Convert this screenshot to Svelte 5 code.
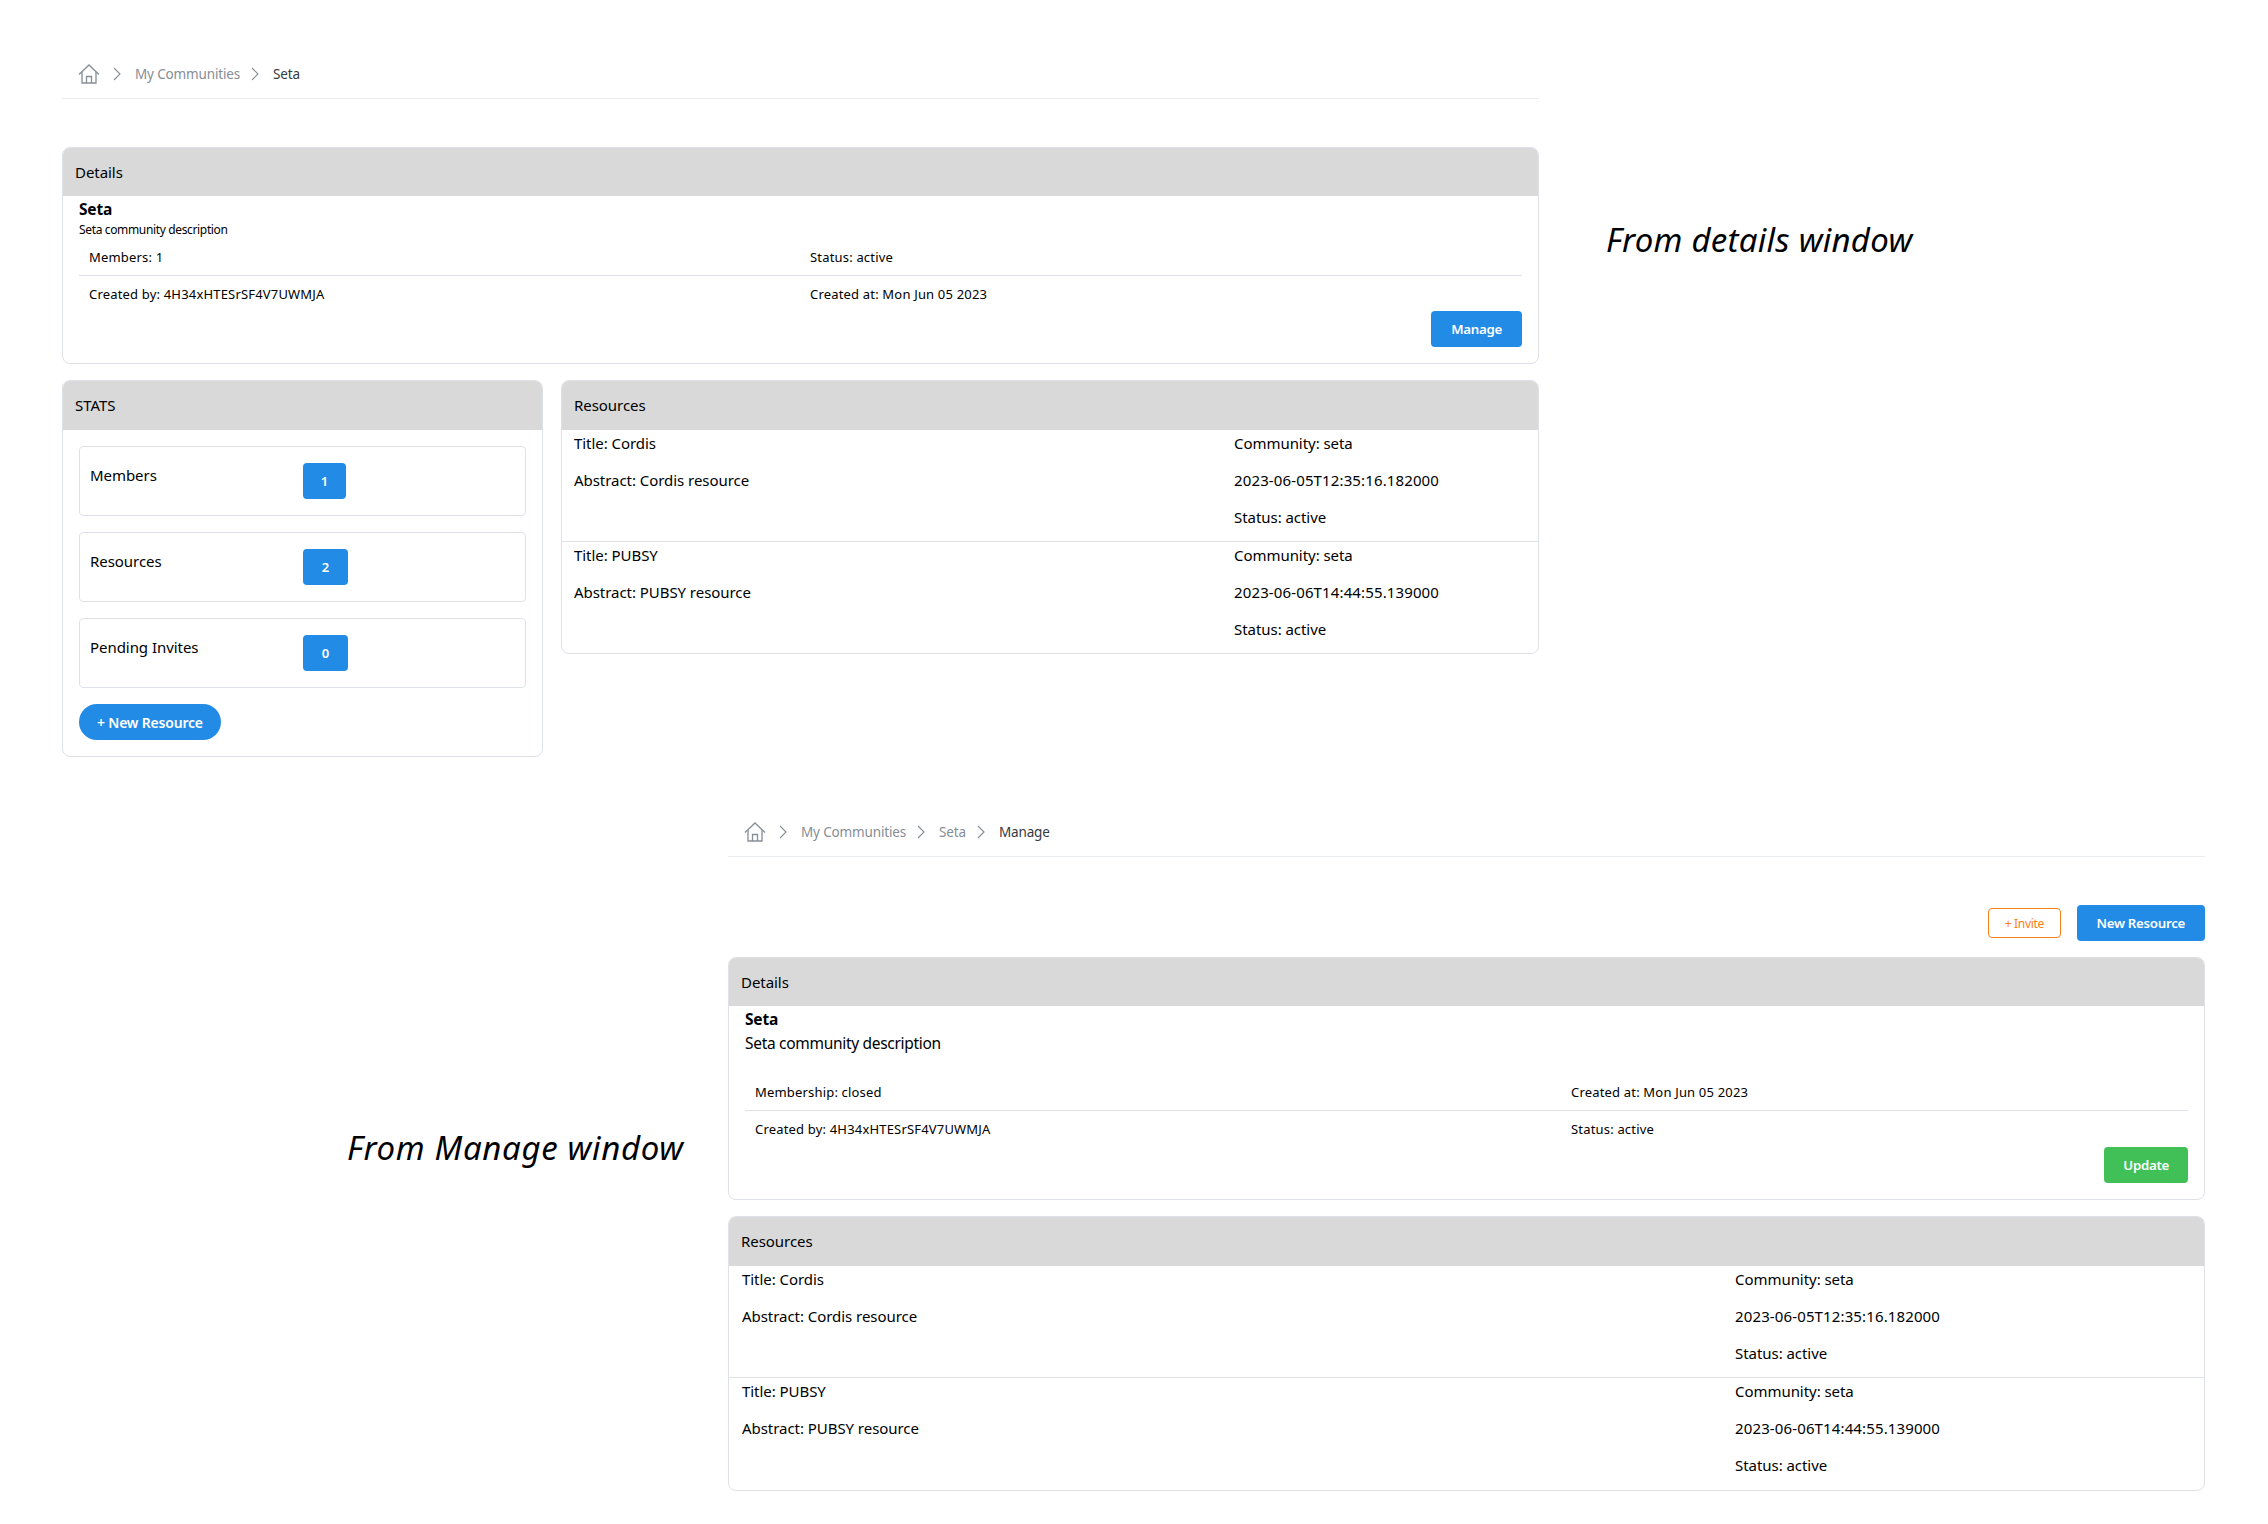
<script>
	const resources = [
		{ title: 'Cordis', abstract: 'Cordis resource', date: '2023-06-05T12:35:16.182000' },
		{ title: 'PUBSY', abstract: 'PUBSY resource', date: '2023-06-06T14:44:55.139000' }
	];
	const stats = [
		{ label: 'Members', value: 1 },
		{ label: 'Resources', value: 2 },
		{ label: 'Pending Invites', value: 0 }
	];
	const creator = 'Created by: 4H34xHTESrSF4V7UWMJA';
	const created = 'Created at: Mon Jun 05 2023';
</script>

{#snippet crumbs(items)}
	<nav class="crumbs">
		<svg class="home" viewBox="0 0 22 20" fill="none" stroke="#868e96" stroke-width="1.3" aria-label="Home">
			<path d="M1 10.5 11 1l10 9.5" />
			<path d="M4 8v11h14V8" />
			<path d="M8.5 19v-6.500h5V19" />
		</svg>
		{#each items as item, i}
			<svg class="chev" viewBox="0 0 8 14" fill="none" stroke="#868e96" stroke-width="1.1"><path d="M1 1l6 6-6 6" /></svg>
			<span class:current={i === items.length - 1}>{item}</span>
		{/each}
	</nav>
{/snippet}

{#snippet resourceCard()}
	<div class="card">
		<div class="card-head tall">Resources</div>
		{#each resources as r}
			<div class="resource">
				<div class="res-col">
					<div>Title: {r.title}</div>
					<div>Abstract: {r.abstract}</div>
				</div>
				<div class="res-col">
					<div>Community: seta</div>
					<div class="date">{r.date}</div>
					<div>Status: active</div>
				</div>
			</div>
		{/each}
	</div>
{/snippet}

<div class="page">
	<section class="top">
		<div class="panel">
			{@render crumbs(['My Communities', 'Seta'])}

			<div class="card first">
				<div class="card-head">Details</div>
				<div class="card-body">
					<div class="name">Seta</div>
					<div class="desc small">Seta community description</div>
					<div class="info one">
						<div>Members: 1</div>
						<div>Status: active</div>
						<div class="line"></div>
						<div>{creator}</div>
						<div>{created}</div>
					</div>
					<div class="end"><button class="btn blue">Manage</button></div>
				</div>
			</div>

			<div class="columns">
				<div class="card">
					<div class="card-head tall">STATS</div>
					<div class="stats">
						{#each stats as s}
							<div class="stat">
								<span class="stat-label">{s.label}</span>
								<span class="badge" class:narrow={s.value === 1}>{s.value}</span>
							</div>
						{/each}
						<div><button class="btn blue pill">+ New Resource</button></div>
					</div>
				</div>
				{@render resourceCard()}
			</div>
		</div>
		<div class="note note-top">From details window</div>
	</section>

	<section class="bottom">
		<div class="note note-bottom">From Manage window</div>
		<div class="panel">
			{@render crumbs(['My Communities', 'Seta', 'Manage'])}

			<div class="actions">
				<button class="btn invite">+ Invite</button>
				<button class="btn blue">New Resource</button>
			</div>

			<div class="card">
				<div class="card-head">Details</div>
				<div class="card-body">
					<div class="name">Seta</div>
					<div class="desc">Seta community description</div>
					<div class="info two">
						<div>Membership: closed</div>
						<div>{created}</div>
						<div class="line"></div>
						<div>{creator}</div>
						<div>Status: active</div>
					</div>
					<div class="end"><button class="btn green">Update</button></div>
				</div>
			</div>

			<div class="wide">{@render resourceCard()}</div>
		</div>
	</section>
</div>

<style>
	:global(body) {
		background: #fff;
		color: #000;
		font-family: 'Noto Sans', 'Open Sans', sans-serif;
	}
	.page {
		width: 2268px;
		height: 1524px;
		overflow: hidden;
	}
	.top,
	.bottom {
		display: flex;
	}
	.top {
		padding-left: 62px;
	}
	.bottom {
		margin-top: 51px;
		padding-left: 347px;
	}
	.panel {
		width: 1477px;
		flex: none;
	}
	.top .crumbs {
		margin-top: 50px;
	}
	.crumbs {
		display: flex;
		align-items: center;
		height: 49px;
		box-sizing: border-box;
		padding-left: 16px;
		border-bottom: 1px solid #e9ecef;
		font-size: 13.5px;
		letter-spacing: -0.15px;
		color: #868e96;
	}
	.current {
		color: #343a40;
	}
	.home {
		width: 22px;
		height: 20px;
		margin-right: 13px;
		margin-top: -1px;
	}
	.chev {
		width: 8px;
		height: 14px;
		margin-right: 14px;
	}
	.crumbs span {
		margin-right: 11px;
	}
	.first {
		margin-top: 48px;
	}
	.card {
		border: 1px solid #dee2e6;
		border-radius: 8px;
		overflow: hidden;
		background: #fff;
		font-size: 15px;
		letter-spacing: -0.05px;
	}
	.card-head {
		height: 48px;
		line-height: 48px;
		padding-left: 12px;
		background: #d9d9d9;
		font-size: 15px;
	}
	.card-head.tall {
		height: 49px;
	}
	.card-body {
		padding: 0 16px 16px;
	}
	.name {
		font-weight: 700;
		font-size: 15.5px;
		line-height: 26px;
		letter-spacing: -0.2px;
	}
	.desc {
		font-size: 15.5px;
		line-height: 22px;
		margin-bottom: 29px;
		letter-spacing: -0.3px;
	}
	.desc.small {
		font-size: 12px;
		line-height: 16px;
		margin-bottom: 0;
		letter-spacing: -0.35px;
	}
	.info {
		display: grid;
		font-size: 13px;
		letter-spacing: 0.18px;
	}
	.info > div:not(.line) {
		padding-left: 10px;
		line-height: 18px;
	}
	.info.one {
		grid-template-columns: 721px 1fr;
		padding-top: 10px;
	}
	.info.two {
		grid-template-columns: 816px 1fr;
	}
	.line {
		grid-column: 1 / -1;
		height: 1px;
		background: #dee2e6;
		margin: 9px 0;
	}
	.end {
		display: flex;
		justify-content: flex-end;
		margin-top: 8px;
	}
	.info.two + .end {
		margin-top: 9px;
	}
	.btn {
		height: 36px;
		padding: 0 19px;
		border: 0;
		border-radius: 4px;
		font-family: inherit;
		font-size: 13.3px;
		font-weight: 600;
		letter-spacing: -0.3px;
		color: #fff;
		cursor: pointer;
	}
	.blue {
		background: #228be6;
		padding: 0 20px;
	}
	.green {
		background: #40c057;
	}
	.blue.pill {
		padding: 0 18px;
		border-radius: 18px;
		font-size: 14px;
		letter-spacing: -0.2px;
	}
	.invite {
		height: 30px;
		padding: 0 15.5px;
		background: #fff;
		border: 1px solid #fd7e14;
		color: #fd7e14;
		font-size: 12px;
		font-weight: 400;
	}
	.actions {
		display: flex;
		justify-content: flex-end;
		align-items: center;
		gap: 16px;
		margin-top: 48px;
		margin-bottom: 16px;
	}
	.columns {
		display: grid;
		grid-template-columns: 481px 1fr;
		gap: 18px;
		align-items: start;
		margin-top: 16px;
	}
	.stats {
		display: flex;
		flex-direction: column;
		gap: 16px;
		padding: 16px;
	}
	.stat {
		display: flex;
		height: 70px;
		box-sizing: border-box;
		padding: 16px 10px;
		border: 1px solid #dee2e6;
		border-radius: 4px;
	}
	.stat-label {
		width: 213px;
		flex: none;
		line-height: 25px;
	}
	.badge {
		width: 45px;
		height: 36px;
		line-height: 36px;
		text-align: center;
		border-radius: 4px;
		background: #228be6;
		color: #fff;
		font-size: 13px;
		font-weight: 600;
	}
	.badge.narrow {
		width: 43px;
	}
	.resource {
		display: grid;
		grid-template-columns: 660px 1fr;
		padding-left: 12px;
		border-bottom: 1px solid #dee2e6;
	}
	.resource:last-child {
		border-bottom: 0;
	}
	.wide {
		margin-top: 16px;
	}
	.wide .resource {
		grid-template-columns: 993px 1fr;
		padding-left: 13px;
	}
	.wide .resource:last-child {
		padding-bottom: 1px;
	}
	.res-col > div {
		height: 37px;
		line-height: 26px;
	}
	.res-col > .date {
		letter-spacing: 0.13px;
	}
	.note {
		flex: none;
		font-style: italic;
		font-size: 33px;
		line-height: 44px;
	}
	.note-top {
		margin-left: 67px;
		margin-top: 218px;
		letter-spacing: 0.25px;
	}
	.note-bottom {
		width: 381px;
		margin-top: 318px;
		letter-spacing: 0.65px;
	}
</style>
